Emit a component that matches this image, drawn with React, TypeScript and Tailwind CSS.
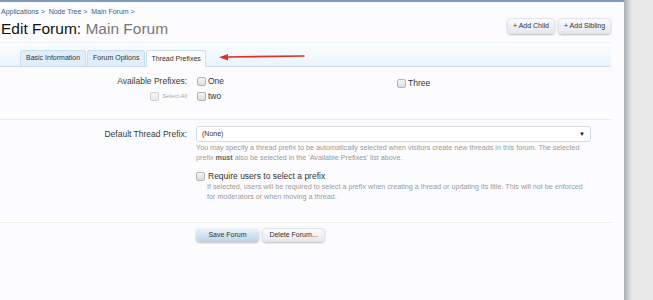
import React from "react";

const Check = ({ className = "" }: { className?: string }) => (
  <span
    className={`inline-block w-[9px] h-[9px] border border-[#b5b5b5] rounded-[2px] bg-gradient-to-b from-[#f6f6f6] to-[#dcdcdc] shrink-0 ${className}`}
  />
);

export default function App() {
  return (
    <div className="w-[653px] h-[300px] flex bg-[#e9e9e9] overflow-hidden" style={{ fontFamily: '"Liberation Sans", Arial, sans-serif' }}>
      <div className="w-[624px] h-full bg-[#fcfcfe] border-t-2 border-[#7d9bbf] flex flex-col">
        <div className="w-[611px] flex flex-col">
          <div className="text-[7px] text-[#3a5d83] pl-[1px] pt-[5px] leading-[10px]">
            Applications &gt;&nbsp; Node Tree &gt;&nbsp; Main Forum &gt;
          </div>
          <div className="flex items-start justify-between">
            <div className="text-[15.5px] leading-[18px] mt-[3px] text-[#111] pl-[1px]">
              Edit Forum: <span className="text-[#777]">Main Forum</span>
            </div>
            <div className="flex gap-[3px] mt-[1px]">
              <button className="h-[16px] w-[48px] text-[7px] text-[#333] rounded-[4px] bg-gradient-to-b from-[#fbfbfd] to-[#e6e8ee] shadow-[0_1px_2px_rgba(0,0,0,0.25)] border border-[#e2e4ea]">+ Add Child</button>
              <button className="h-[16px] w-[53px] text-[7px] text-[#333] rounded-[4px] bg-gradient-to-b from-[#fbfbfd] to-[#e6e8ee] shadow-[0_1px_2px_rgba(0,0,0,0.25)] border border-[#e2e4ea]">+ Add Sibling</button>
            </div>
          </div>
          <div className="mt-[4px] h-[25px] border-t border-[#eef2f6] bg-gradient-to-b from-[#fbfdff] to-[#eaf4fb] border-b border-b-[#c9dfee] flex items-end pl-[20px] relative">
            <div className="flex gap-[1px] text-[7px] text-[#333]">
              <div className="h-[16px] px-[5px] flex items-center bg-[#e2eef7] border border-b-0 border-[#c9dfee] rounded-t-[3px]">Basic Information</div>
              <div className="h-[16px] px-[5px] flex items-center bg-[#e2eef7] border border-b-0 border-[#c9dfee] rounded-t-[3px]">Forum Options</div>
              <div className="h-[17px] px-[4px] flex items-center bg-[#fcfcfe] border border-b-0 border-[#c9dfee] rounded-t-[3px] -mb-[1px]">Thread Prefixes</div>
            </div>
            <svg className="absolute left-[218px] top-[10px]" width="88" height="8" viewBox="0 0 88 8">
              <line x1="8" y1="4" x2="86" y2="3" stroke="#e0302a" strokeWidth="1.6" strokeLinecap="round" />
              <polygon points="1,4.2 10,1 10,7.4" fill="#e0302a" />
            </svg>
          </div>

          <div className="flex pt-[8px] h-[53px] border-b border-[#e6edf3]">
            <div className="w-[187px] flex flex-col items-end">
              <div className="text-[8.5px] text-[#3a3a3a] leading-[12px]">Available Prefixes:</div>
              <div className="flex items-center gap-[3px] mt-[5px] text-[6px] text-[#aaa]">
                <Check className="opacity-60" />
                <span className="italic">Select All</span>
              </div>
            </div>
            <div className="ml-[10px] grid grid-cols-[200px_200px] text-[8.5px] text-[#333] leading-[12px]">
              <div className="flex flex-col gap-[3px]">
                <div className="flex items-center gap-[2px] h-[12px]"><Check /> <span>One</span></div>
                <div className="flex items-center gap-[2px] h-[12px]"><Check /> <span>two</span></div>
              </div>
              <div className="flex flex-col">
                <div className="flex items-center gap-[2px] h-[12px] mt-[2px]"><Check /> <span>Three</span></div>
              </div>
            </div>
          </div>

          <div className="flex pt-[6px] h-[103px] border-b border-[#e6edf3]">
            <div className="w-[187px] flex justify-end">
              <div className="text-[8.5px] text-[#3a3a3a] leading-[12px] mt-[2px]">Default Thread Prefix:</div>
            </div>
            <div className="ml-[9px] flex flex-col">
              <div className="w-[395px] h-[16px] border border-[#d4dbe2] rounded-[3px] bg-white flex items-center justify-between px-[5px] text-[7px] text-[#333]">
                <span>(None)</span>
                <span className="text-[6px] text-[#111]">▼</span>
              </div>
              <div className="text-[7.2px] text-[#9a9a9a] leading-[10px] mt-[1px] whitespace-nowrap">
                You may specify a thread prefix to be automatically selected when visitors create new threads in this forum. The selected<br />
                prefix <b className="text-[#666]">must</b> also be selected in the 'Available Prefixes' list above.
              </div>
              <div className="flex items-center gap-[3px] mt-[7px] text-[8.5px] text-[#333] leading-[12px]">
                <Check /> <span>Require users to select a prefix</span>
              </div>
              <div className="text-[7.2px] text-[#9a9a9a] leading-[10px] ml-[11px] whitespace-nowrap">
                If selected, users will be required to select a prefix when creating a thread or updating its title. This will not be enforced<br />
                for moderators or when moving a thread.
              </div>
            </div>
          </div>

          <div className="flex gap-[3px] ml-[196px] mt-[5px]">
            <button className="h-[14px] w-[63px] text-[7px] text-[#333] rounded-[4px] bg-gradient-to-b from-[#eef4fa] to-[#bcd3e6] shadow-[0_1px_2px_rgba(0,0,0,0.25)]">Save Forum</button>
            <button className="h-[14px] w-[63px] text-[7px] text-[#333] rounded-[4px] bg-gradient-to-b from-[#fbfbfd] to-[#e6e8ee] shadow-[0_1px_2px_rgba(0,0,0,0.25)] border border-[#e2e4ea]">Delete Forum...</button>
          </div>
        </div>
      </div>
      <div className="w-[8px] h-full bg-gradient-to-r from-[#a9b0b8] to-[#e9e9e9]" />
    </div>
  );
}
